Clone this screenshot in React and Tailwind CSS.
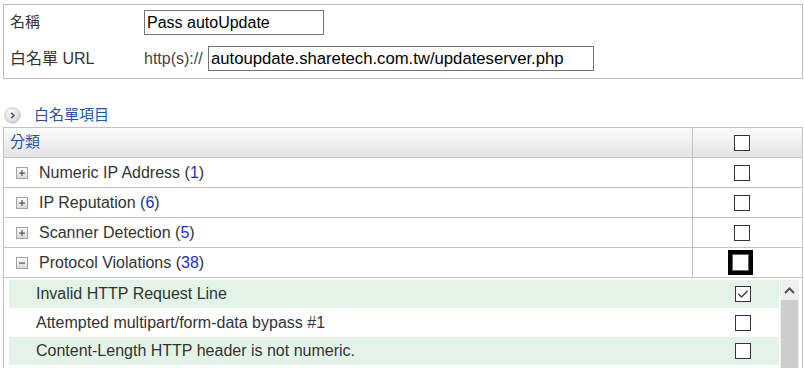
import React from 'react';

const font = { fontFamily: '"Liberation Sans", "Noto Sans CJK TC", Arial, sans-serif' };

const categories = [
  { name: 'Numeric IP Address', count: 1, open: false },
  { name: 'IP Reputation', count: 6, open: false },
  { name: 'Scanner Detection', count: 5, open: false },
  { name: 'Protocol Violations', count: 38, open: true },
];

const rules = [
  { name: 'Invalid HTTP Request Line', checked: true, h: 'h-[28px]', bg: 'bg-[#e3f3e7]' },
  { name: 'Attempted multipart/form-data bypass #1', checked: false, h: 'h-[29px]', bg: 'bg-white' },
  { name: 'Content-Length HTTP header is not numeric.', checked: false, h: 'h-[28px]', bg: 'bg-[#e3f3e7]' },
];

// small +/- box used on category rows
function ToggleBox({ open }) {
  return (
    <svg width="12" height="12" viewBox="0 0 12 12" className="shrink-0">
      <defs>
        <linearGradient id={open ? 'tgo' : 'tgc'} x1="0" y1="0" x2="0" y2="1">
          <stop offset="0" stopColor="#fdfdfd" />
          <stop offset="1" stopColor="#d9d9d9" />
        </linearGradient>
      </defs>
      <rect x="0.5" y="0.5" width="11" height="11" fill={`url(#${open ? 'tgo' : 'tgc'})`} stroke="#a3a3a3" />
      <rect x="3" y="5.5" width="6" height="1.2" fill="#555" />
      {!open && <rect x="5.4" y="3" width="1.2" height="6" fill="#555" />}
    </svg>
  );
}

function Checkbox({ checked }) {
  return (
    <div className="w-[16px] h-[16px] border border-[#333] bg-white flex items-center justify-center">
      {checked && (
        <svg width="12" height="10" viewBox="0 0 12 10">
          <path d="M1.5 5 L4.5 8 L10.5 2" fill="none" stroke="#444" strokeWidth="1.5" />
        </svg>
      )}
    </div>
  );
}

function SectionIcon() {
  return (
    <svg width="17" height="17" viewBox="0 0 17 17">
      <defs>
        <radialGradient id="sec" cx="0.4" cy="0.35" r="0.7">
          <stop offset="0" stopColor="#ffffff" />
          <stop offset="1" stopColor="#cfcfcf" />
        </radialGradient>
      </defs>
      <circle cx="8.5" cy="8.5" r="7.8" fill="url(#sec)" stroke="#c4c4c4" strokeWidth="0.8" />
      <path d="M7.2 5.8 L10 8.5 L7.2 11.2" fill="none" stroke="#3c5a80" strokeWidth="1.6" />
    </svg>
  );
}

export default function App() {
  return (
    <div className="w-[804px] h-[368px] overflow-hidden bg-white text-[#333]" style={font}>
      {/* rule settings */}
      <div className="ml-[3px] mt-[4px] w-[800px] h-[75px] border border-[#bcbcbc] pl-[6px] pt-[5px]">
        <div className="flex items-center h-[25px]">
          <span className="w-[134px] text-[15px]">名稱</span>
          <input
            readOnly
            value="Pass autoUpdate"
            className="w-[180px] h-[25px] border border-[#767676] px-[2px] text-[16px] text-black outline-none"
            style={font}
          />
        </div>
        <div className="flex items-center h-[25px] mt-[11px]">
          <span className="w-[134px] text-[16px]">白名單 URL</span>
          <span className="w-[64px] text-[16px] text-[#444]">http(s)://</span>
          <input
            readOnly
            value="autoupdate.sharetech.com.tw/updateserver.php"
            className="w-[386px] h-[25px] border border-[#767676] px-[2px] text-[16.7px] text-black outline-none"
            style={font}
          />
        </div>
      </div>

      {/* section title */}
      <div className="flex items-center h-[20px] mt-[26px] pl-[4px]">
        <SectionIcon />
        <span className="ml-[13px] text-[15px] text-[#1d56a0]">白名單項目</span>
      </div>

      {/* category table */}
      <div className="ml-[3px] mt-[2px] w-[800px] border border-[#c4c4c4] border-b-0">
        <div className="flex h-[29px] bg-gradient-to-b from-[#fbfbfb] to-[#e4e4e4]">
          <div className="flex-1 flex items-center pl-[6px] text-[15px] text-[#1d56a0] border-r border-[#c4c4c4]">分類</div>
          <div className="w-[109px] flex items-center pl-[41px]">
            <Checkbox />
          </div>
        </div>

        {categories.map((c) => (
          <div key={c.name} className="flex h-[30px] border-t border-[#c4c4c4]">
            <div className="flex-1 flex items-center pl-[12px] border-r border-[#c4c4c4] text-[16px]">
              <ToggleBox open={c.open} />
              <span className="ml-[11px]">
                {c.name} (<span className="text-[#1a2fd0]">{c.count}</span>)
              </span>
            </div>
            <div className="w-[109px] flex items-center">
              {c.open ? (
                <div className="ml-[35px] w-[25px] h-[25px] bg-black p-[4px]">
                  <div className="w-[17px] h-[17px] bg-white border border-[#666]" />
                </div>
              ) : (
                <div className="ml-[41px]">
                  <Checkbox />
                </div>
              )}
            </div>
          </div>
        ))}

        {/* expanded rules list */}
        <div className="border-t border-[#c4c4c4] pl-[5px] pt-[2px] pr-[3px] flex h-[120px]">
          <div className="flex-1">
            {rules.map((r) => (
              <div key={r.name} className={`flex items-center ${r.h} ${r.bg} text-[16px]`}>
                <span className="flex-1 pl-[27px]">{r.name}</span>
                <div className="mr-[28px]">
                  <Checkbox checked={r.checked} />
                </div>
              </div>
            ))}
          </div>
          <div className="w-[19px] ml-[1px] bg-[#f0f0f0] flex flex-col">
            <div className="h-[20px] flex items-center justify-center">
              <svg width="11" height="7" viewBox="0 0 11 7">
                <path d="M1 6 L5.5 1.5 L10 6" fill="none" stroke="#505050" strokeWidth="2" />
              </svg>
            </div>
            <div className="mx-[1px] flex-1 bg-[#cdcdcd]" />
          </div>
        </div>
      </div>
    </div>
  );
}
